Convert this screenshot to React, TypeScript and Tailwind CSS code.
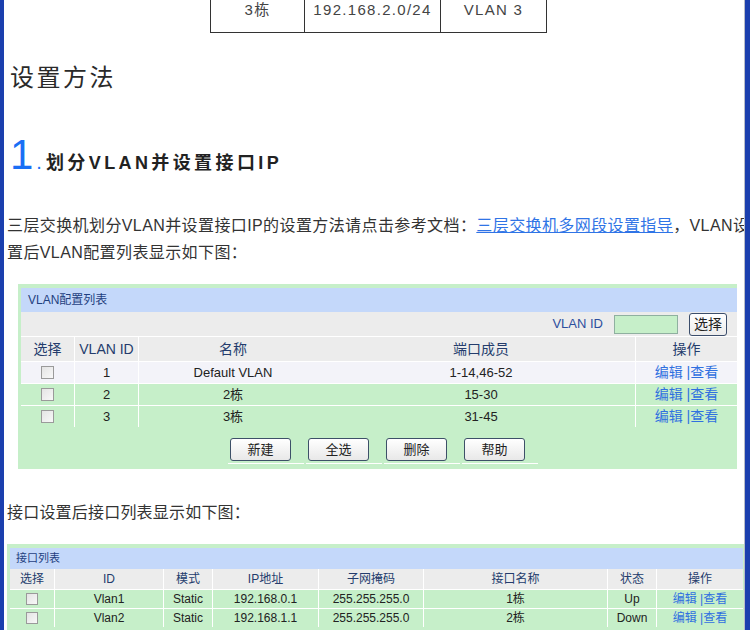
import React from "react";

const F = { fontFamily: '"Liberation Sans", "Noto Sans CJK SC", sans-serif' };

function Check({ size = 13 }: { size?: number }) {
  return (
    <span
      className="inline-block border border-[#9a9a9a] bg-gradient-to-br from-[#e4e4e4] to-[#f8f8f8]"
      style={{ width: size, height: size }}
    />
  );
}

function Btn({ label }: { label: string }) {
  return (
    <div className="w-[76px] border-b border-white pb-[2px]">
      <button className="ml-[2px] w-[61px] h-[23px] rounded-[3px] border border-[#3d5068] bg-gradient-to-b from-white to-[#e8e8e8] text-[13px] text-[#222] leading-none">
        {label}
      </button>
    </div>
  );
}

const vlanRows = [
  { id: "1", name: "Default VLAN", ports: "1-14,46-52", bg: "bg-[#f3f3f9]" },
  { id: "2", name: "2栋", ports: "15-30", bg: "bg-[#c6efc9]" },
  { id: "3", name: "3栋", ports: "31-45", bg: "bg-[#c6efc9]" },
];

const ifCols = ["w-[45px]", "w-[109px]", "w-[49px]", "w-[106px]", "w-[105px]", "w-[184px]", "w-[49px]", "w-[86px]"];
const ifHead = ["选择", "ID", "模式", "IP地址", "子网掩码", "接口名称", "状态", "操作"];
const ifRows = [
  ["Vlan1", "Static", "192.168.0.1", "255.255.255.0", "1栋", "Up"],
  ["Vlan2", "Static", "192.168.1.1", "255.255.255.0", "2栋", "Down"],
];

export default function App() {
  return (
    <div className="w-[750px] h-[630px] flex overflow-hidden bg-white" style={F}>
      <div className="w-[4px] shrink-0 bg-[#1b3fae]" />
      <div className="w-[740px] shrink-0 overflow-hidden">
        {/* top table fragment */}
        <div className="ml-[206px] flex h-[33px] w-[337px] border-x border-b border-[#333] text-[15px] leading-[20px] tracking-[1.3px] text-[#444]">
          <div className="w-[94px] border-r border-[#333] text-center">3栋</div>
          <div className="w-[136px] border-r border-[#333] text-center">192.168.2.0/24</div>
          <div className="flex-1 text-center">VLAN 3</div>
        </div>

        <h2 className="mt-[29px] ml-[6px] text-[24px] leading-[32px] tracking-[2.5px] text-[#2a2a2a]">设置方法</h2>

        <div className="mt-[40px] ml-[6px] flex items-baseline h-[42px]">
          <span className="text-[42px] leading-[42px] text-[#1a6ff5]">1</span>
          <span className="ml-[3px] text-[20px] leading-[20px] text-[#1a6ff5]">.</span>
          <span className="ml-[4px] text-[18px] leading-[20px] font-bold tracking-[3.4px] text-[#222]">划分VLAN并设置接口IP</span>
        </div>

        <p className="mt-[36px] ml-[3px] w-[760px] text-[16px] leading-[27px] tracking-[0.4px] text-[#333] whitespace-nowrap">
          三层交换机划分VLAN并设置接口IP的设置方法请点击参考文档：
          <a className="text-[#2f74e6] underline">三层交换机多网段设置指导</a>，VLAN设
          <br />
          置后VLAN配置列表显示如下图：
        </p>

        {/* VLAN config table */}
        <div className="mt-[18px] ml-[14px] w-[719px] bg-[#c6efc9] pt-[4px] pl-[3px] pb-[5px]">
          <div className="h-[24px] bg-[#c4d8fa] pl-[7px] text-[12px] leading-[24px] text-[#1f3f7f]">VLAN配置列表</div>
          <div className="h-[25px] bg-[#ececec] flex items-center justify-end pr-[10px] border-b border-white">
            <span className="text-[13px] text-[#2c4f9e] mr-[11px]">VLAN ID</span>
            <span className="w-[64px] h-[19px] bg-[#c6efc9] border border-[#8fb0a0] mr-[11px]" />
            <button className="w-[38px] h-[23px] rounded-[3px] border border-[#3b4d6b] bg-gradient-to-b from-white to-[#ececec] text-[14px] text-[#222] leading-none">选择</button>
          </div>
          <div className="flex h-[24px] bg-[#ececec] text-[14px] text-[#243c6c] items-stretch">
            <div className="w-[54px] border-r border-white flex items-center justify-center">选择</div>
            <div className="w-[64px] border-r border-white flex items-center justify-center">VLAN ID</div>
            <div className="w-[188px] flex items-center justify-center">名称</div>
            <div className="w-[309px] border-r border-white flex items-center justify-center">端口成员</div>
            <div className="flex-1 flex items-center justify-center">操作</div>
          </div>
          {vlanRows.map((r) => (
            <div key={r.id} className={`flex h-[22px] border-t border-white text-[13px] text-[#222] ${r.bg}`}>
              <div className="w-[54px] border-r border-white flex items-center justify-center"><Check /></div>
              <div className="w-[64px] border-r border-white flex items-center justify-center">{r.id}</div>
              <div className="w-[188px] flex items-center justify-center">{r.name}</div>
              <div className="w-[309px] border-r border-white flex items-center justify-center">{r.ports}</div>
              <div className="flex-1 flex items-center justify-center text-[14px] text-[#3070e0]">编辑&nbsp;|查看</div>
            </div>
          ))}
          <div className="flex gap-[2px] pt-[10px] ml-[207px]">
            <Btn label="新建" />
            <Btn label="全选" />
            <Btn label="删除" />
            <Btn label="帮助" />
          </div>
        </div>

        <p className="mt-[30px] ml-[3px] text-[16px] leading-[27px] tracking-[0.2px] text-[#333]">接口设置后接口列表显示如下图：</p>

        {/* interface table */}
        <div className="mt-[18px] ml-[3px] w-[739px] bg-[#c6efc9] pt-[4px] px-[3px] pb-[3px]">
          <div className="h-[21px] bg-[#c4d8fa] pl-[6px] text-[11px] leading-[21px] text-[#1f3f7f]">接口列表</div>
          <div className="flex h-[20px] bg-[#ececec] text-[12px] text-[#243c6c]">
            {ifHead.map((h, i) => (
              <div key={h} className={`${ifCols[i]} ${i < 7 ? "border-r border-white" : ""} flex items-center justify-center`}>{h}</div>
            ))}
          </div>
          {ifRows.map((r) => (
            <div key={r[0]} className="flex h-[19px] bg-[#c6efc9] text-[12px] text-[#222] border-t border-white">
              <div className={`${ifCols[0]} border-r border-white flex items-center justify-center`}><Check size={12} /></div>
              {r.map((c, i) => (
                <div key={i} className={`${ifCols[i + 1]} border-r border-white flex items-center justify-center`}>{c}</div>
              ))}
              <div className={`${ifCols[7]} flex items-center justify-center text-[#3070e0]`}>编辑&nbsp;|查看</div>
            </div>
          ))}
        </div>
      </div>
      <div className="w-[1px] shrink-0 bg-[#b8bcc8]" />
      <div className="w-[5px] shrink-0 bg-[#1b3fae]" />
    </div>
  );
}
